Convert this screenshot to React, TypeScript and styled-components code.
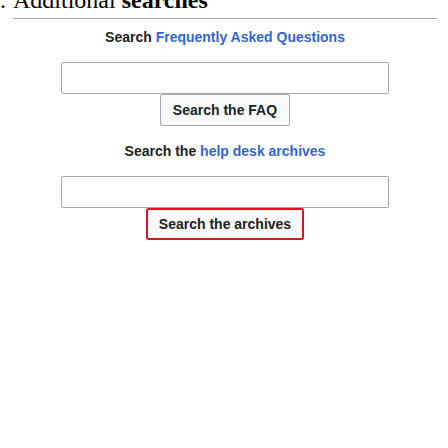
import React from "react";
import styled, { createGlobalStyle } from "styled-components";

const Global = createGlobalStyle`
  html, body { margin: 0; padding: 0; background: #ffffff; }
  body { font-family: "Liberation Sans", Arial, sans-serif; color: #202122; }
`;

const Page = styled.div`
  padding: 0 11px 0 13px;
`;

const Heading = styled.h2`
  margin: -15px 0 0 0;
  padding: 0 0 3px 0;
  font-family: "Liberation Serif", "Times New Roman", serif;
  font-size: 24px;
  font-weight: normal;
  line-height: 30px;
  color: #000;
  border-bottom: 1px solid #a2a9b1;
  white-space: nowrap;
`;

const Num = styled.span`
  display: inline-block;
  width: 13px;
  margin-left: -13px;
`;

const Strong = styled.b`
  font-weight: bold;
`;

const Form = styled.form<{ $top: number }>`
  display: flex;
  flex-direction: column;
  align-items: center;
  margin: ${(p) => p.$top}px 0 0 0;
`;

const Label = styled.div`
  height: 20px;
  font-size: 14px;
  line-height: 20px;
  font-weight: bold;
  color: #202122;
  margin-bottom: 15px;
`;

const Link = styled.a`
  color: #3366cc;
  text-decoration: none;
`;

const Input = styled.input`
  box-sizing: border-box;
  width: 328px;
  height: 32px;
  margin: 0;
  border: 1px solid #a2a9b1;
  border-radius: 2px;
  background: #fff;
  font-family: inherit;
  font-size: 14px;
`;

const Button = styled.button<{ $focus?: boolean }>`
  box-sizing: border-box;
  height: 32px;
  margin: 0;
  padding: 0 12px;
  border: 1px solid ${(p) => (p.$focus ? "#e0131a" : "#a2a9b1")};
  box-shadow: ${(p) => (p.$focus ? "inset 0 0 0 1px #e0131a" : "none")};
  border-radius: 2px;
  background: #f8f9fa;
  color: #202122;
  font-family: "Liberation Sans", Arial, sans-serif;
  font-size: 14px;
  font-weight: bold;
  line-height: 20px;
`;

export default function App() {
  return (
    <Page>
      <Global />
      <Heading>
        <Num>.</Num>Additional <Strong>searches</Strong>
      </Heading>
      <Form $top={8} onSubmit={(e) => e.preventDefault()}>
        <Label>
          Search <Link href="#">Frequently Asked Questions</Link>
        </Label>
        <Input type="text" />
        <Button type="submit">Search the FAQ</Button>
      </Form>
      <Form $top={15} onSubmit={(e) => e.preventDefault()}>
        <Label>
          Search the <Link href="#">help desk archives</Link>
        </Label>
        <Input type="text" />
        <Button type="submit" $focus>
          Search the archives
        </Button>
      </Form>
    </Page>
  );
}
